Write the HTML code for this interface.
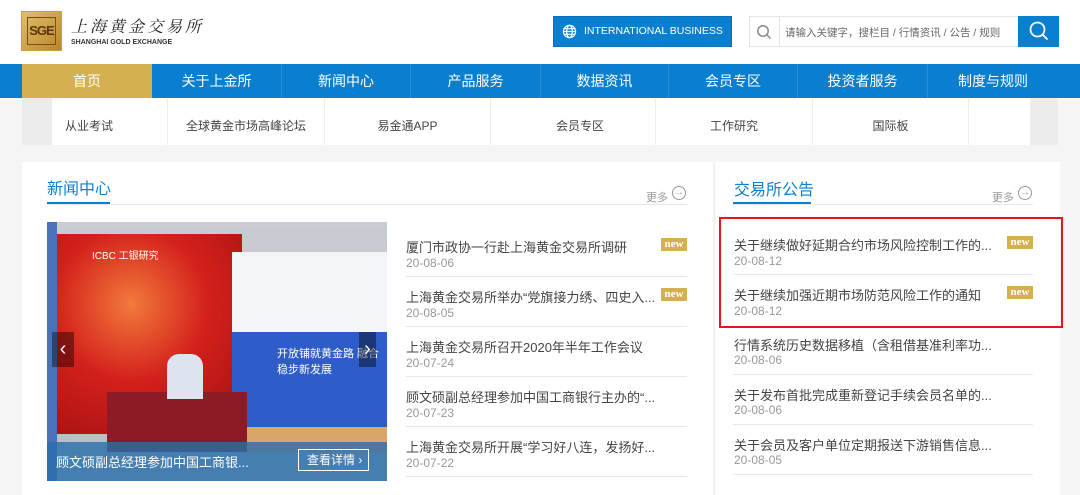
<!DOCTYPE html>
<html><head><meta charset="utf-8"><style>
*{margin:0;padding:0;box-sizing:border-box}
body{width:1080px;height:495px;overflow:hidden;background:#f5f5f5;font-family:"Liberation Sans","Noto Sans CJK SC",sans-serif;position:relative;color:#333}
.a{position:absolute}
.nav div{position:absolute;top:0;height:34px;line-height:34px;text-align:center;color:#fff;font-size:14px;border-left:1px solid #2a8fd6}
.sub div{position:absolute;top:0;height:47px;line-height:57px;text-align:center;font-size:12px;color:#444;background:#fff;border-left:1px solid #eee}
.t{position:absolute;font-size:13px;color:#444;white-space:nowrap}
.d{position:absolute;font-size:12px;color:#999}
.l{position:absolute;height:1px;background:#e8e8e8}
.new{position:absolute;width:26px;height:13px;background:#d4b050;color:#fff;font:bold 11px/13px "Liberation Serif",serif;text-align:center}
.more{position:absolute;font-size:11px;color:#999}
.circ{position:absolute;width:14px;height:14px;border:1px solid #999;border-radius:50%;font-size:10px;line-height:12px;text-align:center;color:#999}
</style></head><body>
<div class="a" style="left:0;top:0;width:1080px;height:64px;background:#fff"></div>
<!-- logo -->
<div class="a" style="left:21px;top:11px;width:41px;height:40px;background:linear-gradient(135deg,#e2bf6a,#b8862d);border:1px solid #c9a04a"></div>
<div class="a" style="left:27px;top:17px;width:29px;height:28px;border:1px solid #7a4e10;color:#5a3608;font:bold 13px/26px 'Liberation Sans';text-align:center;letter-spacing:-1px">SGE</div>
<div class="a" style="left:71px;top:16px;font:16px/20px 'Noto Serif CJK SC',serif;color:#222;letter-spacing:3px;font-style:italic">上海黄金交易所</div>
<div class="a" style="left:71px;top:38px;font:bold 7px/9px 'Liberation Sans';color:#333">SHANGHAI GOLD EXCHANGE</div>
<!-- intl -->
<div class="a" style="left:553px;top:16px;width:179px;height:31px;background:#0a7fcf;border:1px solid #0870bb;color:#fff;font-size:10.5px;line-height:29px;padding-left:30px;white-space:nowrap">INTERNATIONAL BUSINESS</div>
<svg class="a" style="left:562px;top:24px" width="15" height="15" viewBox="0 0 16 16" fill="none" stroke="#fff" stroke-width="1.3"><circle cx="8" cy="8" r="6.5"/><ellipse cx="8" cy="8" rx="3" ry="6.5"/><path d="M1.5 8h13M2.5 5h11M2.5 11h11"/></svg>
<div class="a" style="left:749px;top:16px;width:270px;height:31px;border:1px solid #e5e5e5;background:#fff"></div>
<div class="a" style="left:779px;top:16px;width:1px;height:31px;background:#e5e5e5"></div>
<svg class="a" style="left:756px;top:24px" width="16" height="16" viewBox="0 0 16 16" fill="none" stroke="#888" stroke-width="1.5"><circle cx="7" cy="7" r="5.2"/><path d="M11 11l3.5 3.5"/></svg>
<div class="a" style="left:785px;top:25px;font-size:10.5px;color:#666;white-space:nowrap">请输入关键字，搜栏目 / 行情资讯 / 公告 / 规则</div>
<div class="a" style="left:1018px;top:16px;width:41px;height:31px;background:#0a7fcf"></div>
<svg class="a" style="left:1027px;top:19px" width="24" height="24" viewBox="0 0 24 24" fill="none" stroke="#fff" stroke-width="1.8"><circle cx="10.5" cy="10.5" r="7"/><path d="M15.5 15.5l5 5"/></svg>
<!-- nav -->
<div class="a nav" style="left:0;top:64px;width:1080px;height:34px;background:#0a7fcf">
<div style="left:22px;width:130px;background:#d4b050;border:none">首页</div>
<div style="left:152px;width:129px;border:none">关于上金所</div>
<div style="left:281px;width:129px">新闻中心</div>
<div style="left:410px;width:130px">产品服务</div>
<div style="left:540px;width:128px">数据资讯</div>
<div style="left:668px;width:129px">会员专区</div>
<div style="left:797px;width:130px">投资者服务</div>
<div style="left:927px;width:131px">制度与规则</div>
</div>
<!-- subnav -->
<div class="a" style="left:22px;top:98px;width:1036px;height:47px;background:#ececec"></div>
<div class="a sub" style="left:0;top:98px;width:1080px;height:47px">
<div style="left:52px;width:115px;text-align:left;padding-left:13px;border:none">从业考试</div>
<div style="left:167px;width:157px">全球黄金市场高峰论坛</div>
<div style="left:324px;width:166px">易金通APP</div>
<div style="left:490px;width:165px;text-align:left;padding-left:65px">会员专区</div>
<div style="left:655px;width:157px">工作研究</div>
<div style="left:812px;width:156px">国际板</div>
<div style="left:968px;width:62px"></div>
</div>
<!-- panels -->
<div class="a" style="left:22px;top:162px;width:691px;height:333px;background:#fff"></div>
<div class="a" style="left:714px;top:162px;width:346px;height:333px;background:#fff;border-left:1px solid #eee"></div>
<div class="a" style="left:47px;top:175px;font-size:16px;color:#0a7fcf">新闻中心</div>
<div class="l" style="left:47px;top:204px;width:640px"></div>
<div class="a" style="left:47px;top:202px;width:63px;height:2px;background:#0a7fcf"></div>
<div class="more" style="left:646px;top:189px">更多</div><div class="circ" style="left:672px;top:186px">→</div>
<div class="a" style="left:734px;top:176px;font-size:16px;color:#0a7fcf">交易所公告</div>
<div class="l" style="left:733px;top:204px;width:300px"></div>
<div class="a" style="left:733px;top:202px;width:78px;height:2px;background:#0a7fcf"></div>
<div class="more" style="left:992px;top:189px">更多</div><div class="circ" style="left:1018px;top:186px">→</div>
<!-- photo -->
<div class="a" style="left:47px;top:222px;width:340px;height:259px;overflow:hidden;background:linear-gradient(#c9ccd2,#b8bcc4)">
<div class="a" style="left:10px;top:12px;width:185px;height:200px;background:radial-gradient(circle at 40% 35%,#f27a3a,#d3201c 45%,#a01010)"></div>
<div class="a" style="left:185px;top:30px;width:160px;height:90px;background:#f4f5f8"></div>
<div class="a" style="left:185px;top:110px;width:160px;height:95px;background:#2e5cc8"></div>
<div class="a" style="left:185px;top:205px;width:160px;height:25px;background:#d9a66a"></div>
<div class="a" style="left:0;top:0;width:10px;height:259px;background:#4a72b8"></div>
<div class="a" style="left:60px;top:170px;width:140px;height:60px;background:#8e1a25"></div>
<div class="a" style="left:120px;top:132px;width:36px;height:45px;background:#dde4f0;border-radius:12px 12px 0 0"></div>
<div class="a" style="left:45px;top:25px;font-size:10px;color:#fff">ICBC 工银研究</div>
<div class="a" style="left:230px;top:123px;font-size:11px;color:#fff">开放铺就黄金路 融合稳步新发展</div>
<div class="a" style="left:5px;top:110px;width:22px;height:35px;background:rgba(0,0,0,.4);color:#fff;font-size:20px;line-height:35px;text-align:center">‹</div>
<div class="a" style="left:312px;top:110px;width:17px;height:35px;background:rgba(0,0,0,.4);color:#fff;font-size:20px;line-height:35px;text-align:center">›</div>
<div class="a" style="left:0;top:220px;width:340px;height:39px;background:rgba(40,110,170,.8)"></div>
<div class="a" style="left:9px;top:230px;font-size:13px;color:#fff">顾文硕副总经理参加中国工商银...</div>
<div class="a" style="left:251px;top:227px;width:71px;height:22px;border:1px solid #fff;color:#fff;font-size:12px;line-height:20px;padding-left:8px">查看详情 ›</div>
</div>
<!-- left list -->
<div class="t" style="left:406px;top:237px">厦门市政协一行赴上海黄金交易所调研</div><div class="new" style="left:661px;top:238px">new</div><div class="d" style="left:406px;top:256px">20-08-06</div><div class="l" style="left:406px;top:276px;width:281px"></div>
<div class="t" style="left:406px;top:287px">上海黄金交易所举办“党旗接力绣、四史入...</div><div class="new" style="left:661px;top:288px">new</div><div class="d" style="left:406px;top:306px">20-08-05</div><div class="l" style="left:406px;top:326px;width:281px"></div>
<div class="t" style="left:406px;top:337px">上海黄金交易所召开2020年半年工作会议</div><div class="d" style="left:406px;top:356px">20-07-24</div><div class="l" style="left:406px;top:376px;width:281px"></div>
<div class="t" style="left:406px;top:387px">顾文硕副总经理参加中国工商银行主办的“...</div><div class="d" style="left:406px;top:406px">20-07-23</div><div class="l" style="left:406px;top:426px;width:281px"></div>
<div class="t" style="left:406px;top:437px">上海黄金交易所开展“学习好八连，发扬好...</div><div class="d" style="left:406px;top:456px">20-07-22</div><div class="l" style="left:406px;top:476px;width:281px"></div>
<!-- right list -->
<div class="t" style="left:734px;top:235px">关于继续做好延期合约市场风险控制工作的...</div><div class="new" style="left:1007px;top:236px">new</div><div class="d" style="left:734px;top:254px">20-08-12</div><div class="l" style="left:733px;top:274px;width:300px"></div>
<div class="t" style="left:734px;top:285px">关于继续加强近期市场防范风险工作的通知</div><div class="new" style="left:1007px;top:286px">new</div><div class="d" style="left:734px;top:304px">20-08-12</div>
<div class="t" style="left:734px;top:335px">行情系统历史数据移植（含租借基准利率功...</div><div class="d" style="left:734px;top:353px">20-08-06</div><div class="l" style="left:733px;top:374px;width:300px"></div>
<div class="t" style="left:734px;top:385px">关于发布首批完成重新登记手续会员名单的...</div><div class="d" style="left:734px;top:403px">20-08-06</div><div class="l" style="left:733px;top:424px;width:300px"></div>
<div class="t" style="left:734px;top:435px">关于会员及客户单位定期报送下游销售信息...</div><div class="d" style="left:734px;top:453px">20-08-05</div><div class="l" style="left:733px;top:474px;width:300px"></div>
<div class="a" style="left:719px;top:217px;width:344px;height:111px;border:2px solid #e8141b"></div>
</body></html>
